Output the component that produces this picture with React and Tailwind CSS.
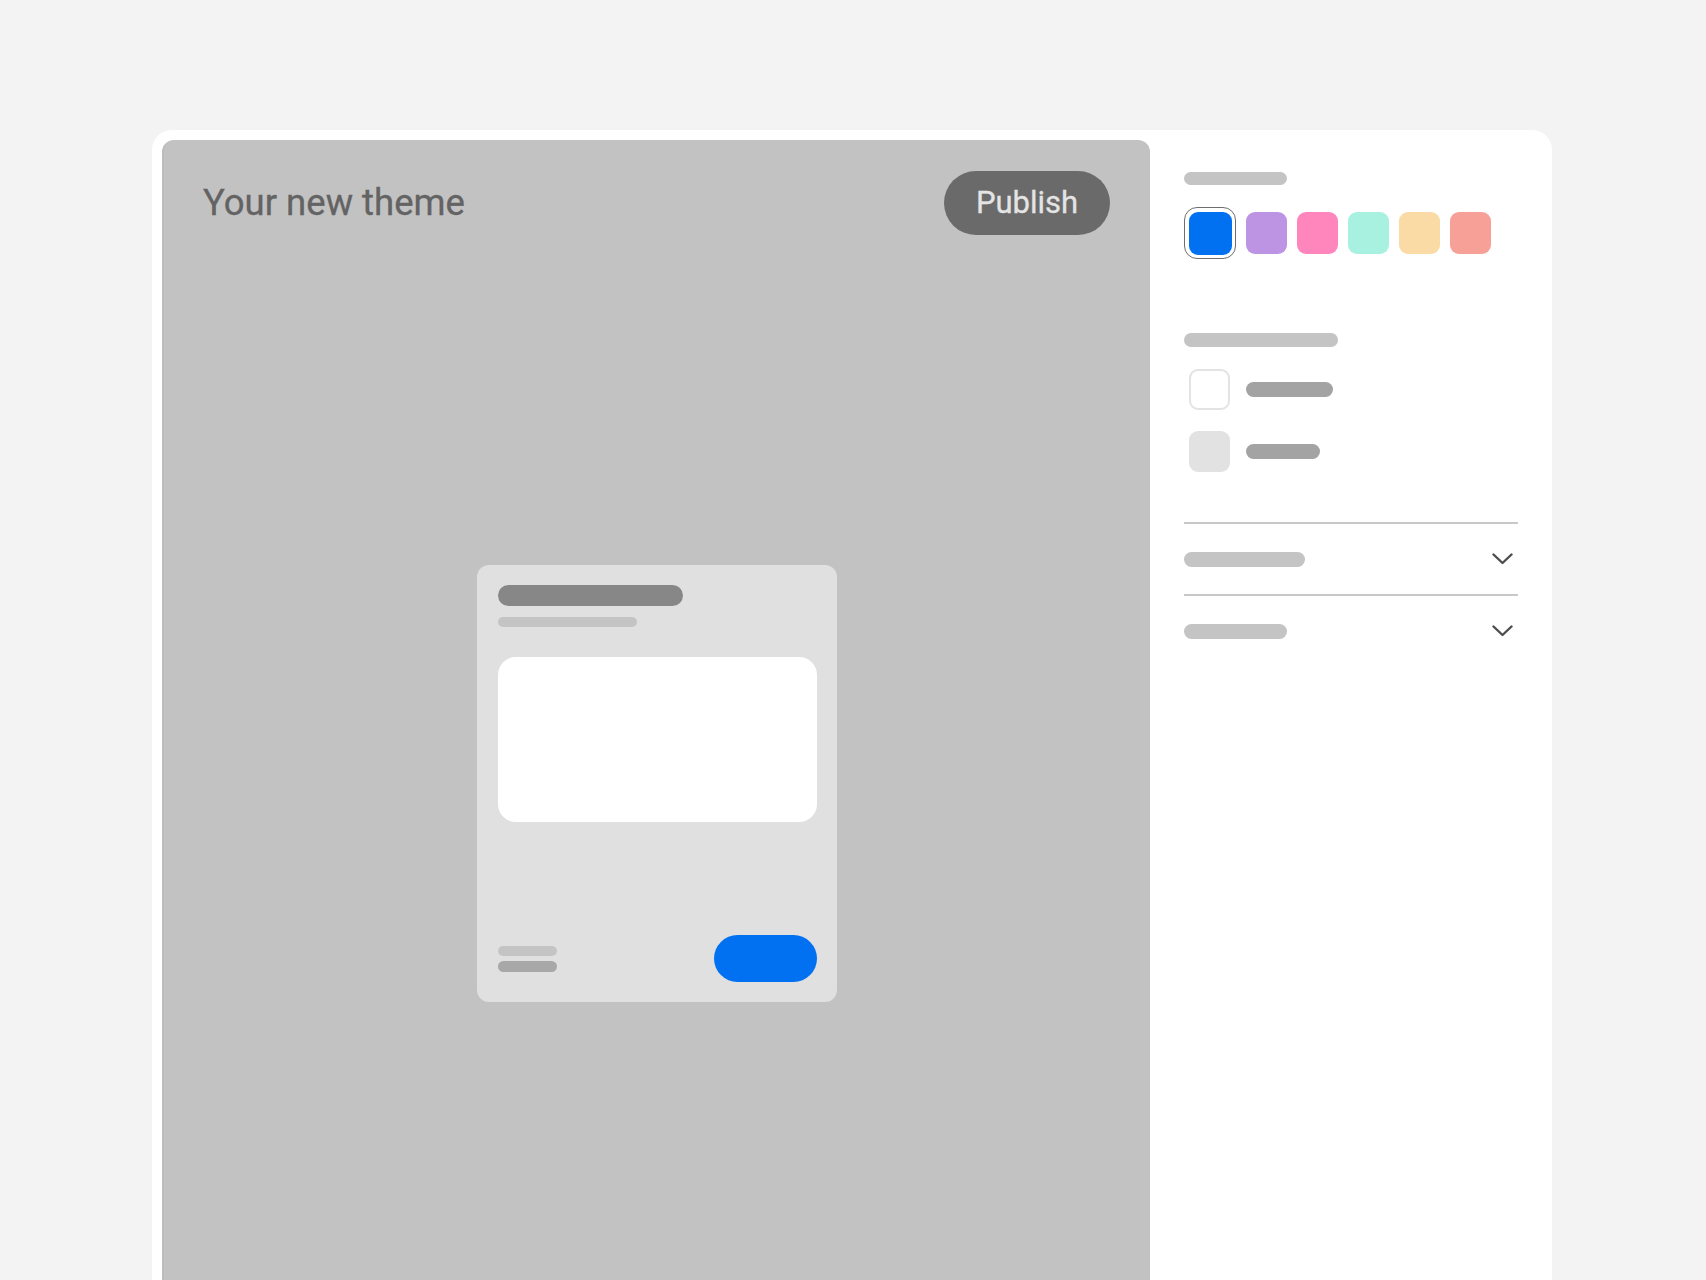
import React from "react";

const swatches = ["#bd93e3", "#ff85bd", "#a8f0e0", "#fadaa5", "#f7a098"];

const Chevron = () => (
  <svg width="21" height="12" viewBox="0 0 21 12" fill="none">
    <polyline
      points="1.5,1.5 10.5,10 19.5,1.5"
      stroke="#4d4d4d"
      strokeWidth="2.4"
      strokeLinecap="round"
      strokeLinejoin="round"
    />
  </svg>
);

const PreviewCard = () => (
  <div className="mx-auto mt-[330px] flex h-[437px] w-[360px] flex-col rounded-[12px] bg-[#e0e0e0] pb-[20px] pl-[21px] pr-[20px] pt-[20px]">
    <div className="h-[21px] w-[185px] rounded-full bg-[#878787]" />
    <div className="mt-[11px] h-[10px] w-[139px] rounded-full bg-[#c4c4c4]" />
    <div className="mt-[30px] h-[165px] w-[319px] rounded-[18px] bg-white" />
    <div className="mt-auto flex items-center justify-between">
      <div className="flex flex-col gap-[5px]">
        <div className="h-[10px] w-[59px] rounded-full bg-[#c4c4c4]" />
        <div className="h-[11px] w-[59px] rounded-full bg-[#a8a8a8]" />
      </div>
      <div className="h-[47px] w-[103px] rounded-full bg-[#0171f2]" />
    </div>
  </div>
);

const AccordionRow = ({ width }) => (
  <div className="flex h-[70px] items-center justify-between pr-[5px]">
    <div className={`h-[15px] rounded-full bg-[#c4c4c4] ${width}`} />
    <Chevron />
  </div>
);

export default function App() {
  return (
    <div className="h-[1280px] overflow-hidden bg-[#f3f3f3] pt-[130px] font-['Roboto',sans-serif]">
      <div className="ml-[152px] flex h-[1150px] w-[1400px] items-start rounded-t-[20px] bg-white">
        {/* preview area */}
        <div className="ml-[10px] mt-[10px] h-[1140px] w-[988px] rounded-t-[12px] border-l-2 border-[#bcbcbc] bg-[#c2c2c2]">
          <div className="flex items-center justify-between pl-[39px] pr-[40px] pt-[31px]">
            <h1 className="text-[36.5px] font-normal text-[#636363] [-webkit-text-stroke:0.3px_#636363]">
              Your new theme
            </h1>
            <button className="h-[64px] w-[166px] rounded-full bg-[#6a6a6a] text-[31px] font-normal text-[#e4e4e4] [-webkit-text-stroke:0.3px_#e4e4e4]">
              Publish
            </button>
          </div>
          <PreviewCard />
        </div>

        {/* settings sidebar */}
        <aside className="flex-1 px-[34px] pt-[42px]">
          <div className="h-[13px] w-[103px] rounded-full bg-[#c4c4c4]" />
          <div className="mt-[22px] flex items-center gap-[10px]">
            <div className="h-[52px] w-[52px] rounded-[13px] border-[1.5px] border-[#6e6e6e] p-[3.5px]">
              <div className="h-full w-full rounded-[9px] bg-[#0171f2]" />
            </div>
            {swatches.map((c) => (
              <div
                key={c}
                className="h-[42px] w-[41px] rounded-[9px]"
                style={{ backgroundColor: c }}
              />
            ))}
          </div>

          <div className="mt-[74px] h-[14px] w-[154px] rounded-full bg-[#c4c4c4]" />
          <div className="ml-[5px] mt-[22px] flex items-center gap-[16px]">
            <div className="h-[41px] w-[41px] rounded-[9px] border-2 border-[#e3e3e3]" />
            <div className="h-[15px] w-[87px] rounded-full bg-[#a3a3a3]" />
          </div>
          <div className="ml-[5px] mt-[21px] flex items-center gap-[16px]">
            <div className="h-[41px] w-[41px] rounded-[9px] bg-[#e2e2e2]" />
            <div className="h-[15px] w-[74px] rounded-full bg-[#a3a3a3]" />
          </div>

          <div className="mt-[50px] h-[2px] w-[334px] bg-[#c8c8c8]" />
          <AccordionRow width="w-[121px]" />
          <div className="h-[2px] w-[334px] bg-[#c8c8c8]" />
          <AccordionRow width="w-[103px]" />
        </aside>
      </div>
    </div>
  );
}
